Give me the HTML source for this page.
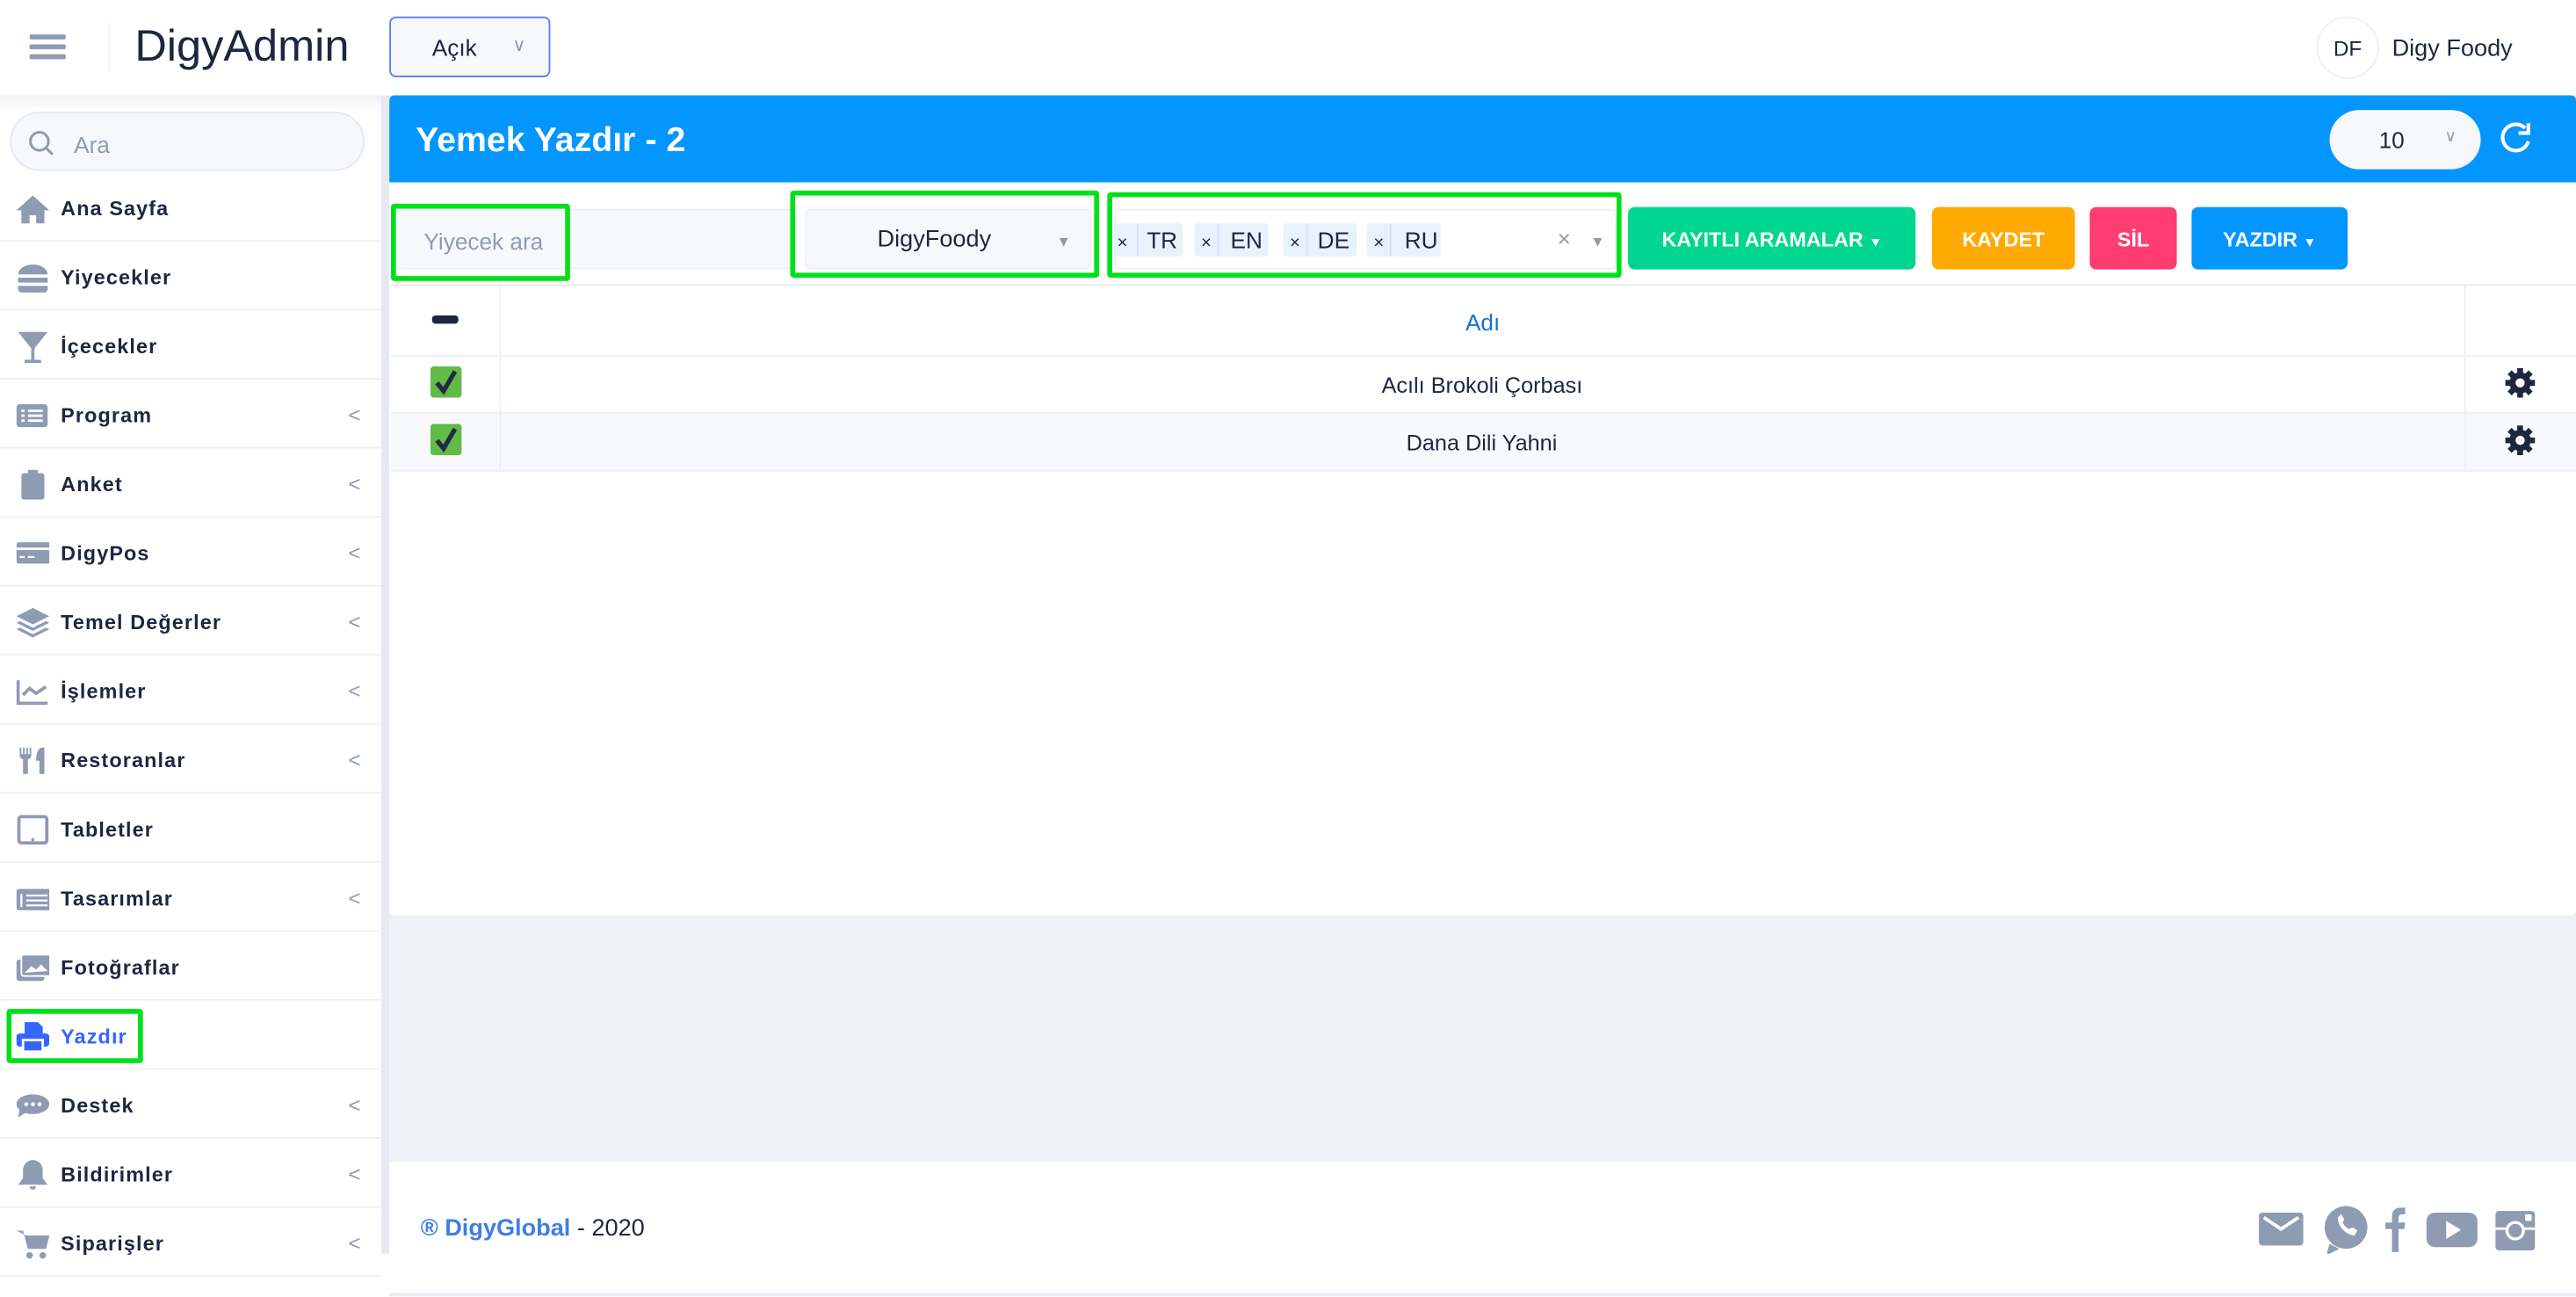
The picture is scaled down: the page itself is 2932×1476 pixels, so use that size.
<!DOCTYPE html>
<html><head><meta charset="utf-8"><style>
*{box-sizing:border-box;margin:0;padding:0}
html,body{width:2932px;height:1476px;overflow:hidden;background:#fff}
#w{width:1568px;height:789.4px;transform:scale(1.86990);transform-origin:0 0;position:relative;font-family:"Liberation Sans",sans-serif;color:#1e2640;background:#fff}
.a{position:absolute}
.nav{position:absolute;left:0;width:232px;height:42px;border-bottom:1px solid #edf0f5}
.nav .ic{position:absolute;left:10px;top:12px;width:20px;height:20px}
.nav .t{position:absolute;left:37px;top:15px;font-size:12.5px;font-weight:bold;letter-spacing:.6px;color:#1e2640}
.nav .ch{position:absolute;left:212px;top:14px;font-size:13px;color:#8f9bb3}
.btn{position:absolute;top:126px;height:38px;border-radius:4px;color:#fff;font-weight:bold;font-size:12.5px;text-align:center;line-height:40px}
.gb{position:absolute;border:3px solid #00e01a;border-radius:2px}
.tag{position:absolute;top:136px;height:20px;background:#e8f2fd;font-size:14px;line-height:21px;border-radius:2px}
</style></head><body><div id="w">
<div class="a" style="left:18px;top:21px;width:22px"><div style="height:3px;background:#8f9bb3;margin-bottom:3px;border-radius:1px"></div><div style="height:3px;background:#8f9bb3;margin-bottom:3px;border-radius:1px"></div><div style="height:3px;background:#8f9bb3;border-radius:1px"></div></div>
<div class="a" style="left:66px;top:14px;width:1px;height:30px;background:#edf0f5"></div>
<div class="a" style="left:82px;top:13px;font-size:27px">DigyAdmin</div>
<div class="a" style="left:237px;top:10px;width:98px;height:37px;border:1px solid #5a7ff0;border-radius:4px;background:#f7f8fc"><span class="a" style="left:25px;top:10px;font-size:14px">Açık</span><span class="a" style="left:74px;top:10px;font-size:11px;color:#8f9bb3">&#8744;</span></div>
<div class="a" style="left:1410px;top:10px;width:38px;height:38px;border-radius:50%;border:1px solid #edf0f5;font-size:13px;text-align:center;line-height:38px">DF</div>
<div class="a" style="left:1456px;top:22px;font-size:14.5px">Digy Foody</div>
<div class="a" style="left:0;top:58px;width:232px;height:10px;background:linear-gradient(#f2f2f4,#fff)"></div>
<div class="a" style="left:232px;top:58px;width:5px;height:705px;background:#e6e9f2"></div>
<div class="a" style="left:6px;top:68px;width:216px;height:36px;border:1px solid #e4e9f2;border-radius:18px;background:#f7f8fc"><svg class="a" style="left:10px;top:10px" width="16" height="16"><circle cx="7" cy="7" r="5.5" fill="none" stroke="#8f9bb3" stroke-width="1.6"/><path d="M11 11l4 4" stroke="#8f9bb3" stroke-width="1.6"/></svg><span class="a" style="left:38px;top:11px;font-size:14px;color:#8f9bb3">Ara</span></div>
<div class="nav" style="top:105px"><svg class="ic" viewBox="0 0 20 20"><path d="M10 2L0 11h3v8h5v-5h4v5h5v-8h3z" fill="#8f9bb3"/></svg><span class="t">Ana Sayfa</span></div>
<div class="nav" style="top:147px"><svg class="ic" viewBox="0 0 20 20"><path d="M1 8a9 6 0 0118 0zM1 10h18v3H1zM1 15h18v2a2 2 0 01-2 2H3a2 2 0 01-2-2z" fill="#8f9bb3"/></svg><span class="t">Yiyecekler</span></div>
<div class="nav" style="top:189px"><svg class="ic" viewBox="0 0 20 20"><path d="M1 1h18L11 11v7h4v2H5v-2h4v-7z" fill="#8f9bb3"/></svg><span class="t">İçecekler</span></div>
<div class="nav" style="top:231px"><svg class="ic" viewBox="0 0 20 20"><rect x="0" y="3" width="19" height="14" rx="2" fill="#8f9bb3"/><path d="M3 7h2M7 7h9M3 10h2M7 10h9M3 13h2M7 13h9" stroke="#fff" stroke-width="1.5"/></svg><span class="t">Program</span><span class="ch">&lt;</span></div>
<div class="nav" style="top:273px"><svg class="ic" viewBox="0 0 20 20"><rect x="3" y="3" width="14" height="16" rx="1.5" fill="#8f9bb3"/><rect x="7" y="1" width="6" height="3" fill="#8f9bb3"/></svg><span class="t">Anket</span><span class="ch">&lt;</span></div>
<div class="nav" style="top:315px"><svg class="ic" viewBox="0 0 20 20"><rect x="0" y="3" width="21" height="13" rx="1.5" fill="#8f9bb3"/><path d="M0 7h21" stroke="#fff" stroke-width="1.5"/><path d="M2 12h3M7 12h4" stroke="#fff" stroke-width="1.2"/></svg><span class="t">DigyPos</span><span class="ch">&lt;</span></div>
<div class="nav" style="top:357px"><svg class="ic" viewBox="0 0 20 20"><path d="M10 1L0 6l10 5 10-5zM0 10l10 5 10-5-2-1-8 4-8-4zM0 14l10 5 10-5-2-1-8 4-8-4z" fill="#8f9bb3"/></svg><span class="t">Temel Değerler</span><span class="ch">&lt;</span></div>
<div class="nav" style="top:399px"><svg class="ic" viewBox="0 0 20 20"><path d="M1 3v14h18" stroke="#8f9bb3" stroke-width="2" fill="none"/><path d="M4 12l4-4 4 3 6-4" stroke="#8f9bb3" stroke-width="2" fill="none"/></svg><span class="t">İşlemler</span><span class="ch">&lt;</span></div>
<div class="nav" style="top:441px"><svg class="ic" viewBox="0 0 20 20"><path d="M2 2v5a2 2 0 002 2v9h3V9a2 2 0 002-2V2H8v4H7V2H6v4H5V2H4v4H3V2zM16 2c-3 0-4 4-4 8h2v8h3V2z" fill="#8f9bb3"/></svg><span class="t">Restoranlar</span><span class="ch">&lt;</span></div>
<div class="nav" style="top:483px"><svg class="ic" viewBox="0 0 20 20"><rect x="1.5" y="2" width="17" height="16" rx="1.5" fill="none" stroke="#8f9bb3" stroke-width="2"/><circle cx="10" cy="16" r="1" fill="#8f9bb3"/></svg><span class="t">Tabletler</span></div>
<div class="nav" style="top:525px"><svg class="ic" viewBox="0 0 20 20"><rect x="0" y="4" width="21" height="13" rx="1.5" fill="#8f9bb3"/><path d="M3 7v8M6 8h13M6 11h13M6 14h13" stroke="#fff" stroke-width="1.2"/></svg><span class="t">Tasarımlar</span><span class="ch">&lt;</span></div>
<div class="nav" style="top:567px"><svg class="ic" viewBox="0 0 20 20"><rect x="0" y="5" width="17" height="13" rx="1.5" fill="#8f9bb3"/><rect x="3" y="2" width="18" height="13" rx="1.5" fill="#8f9bb3" stroke="#fff" stroke-width="1"/><path d="M5 13l4-4 3 2 3-3 4 4z" fill="#fff"/></svg><span class="t">Fotoğraflar</span></div>
<div class="nav" style="top:609px"><svg class="ic" viewBox="0 0 20 20"><path d="M5 1h8l3 3v4H5z" fill="#3366ff"/><rect x="0" y="8" width="20" height="8" rx="2" fill="#3366ff"/><rect x="4" y="12" width="12" height="7" fill="#3366ff" stroke="#fff" stroke-width="1.5"/></svg><span class="t" style="color:#3366ff">Yazdır</span></div>
<div class="gb" style="left:4px;top:614px;width:83px;height:33px"></div>
<div class="nav" style="top:651px"><svg class="ic" viewBox="0 0 20 20"><ellipse cx="10" cy="9" rx="10" ry="6" fill="#8f9bb3"/><path d="M2 12l-1 5 5-3z" fill="#8f9bb3"/><circle cx="6" cy="9" r="1.2" fill="#fff"/><circle cx="10" cy="9" r="1.2" fill="#fff"/><circle cx="14" cy="9" r="1.2" fill="#fff"/></svg><span class="t">Destek</span><span class="ch">&lt;</span></div>
<div class="nav" style="top:693px"><svg class="ic" viewBox="0 0 20 20"><path d="M10 1a6 6 0 00-6 6v5l-3 4h18l-3-4V7a6 6 0 00-6-6zM8 17h4a2 2 0 01-4 0z" fill="#8f9bb3"/></svg><span class="t">Bildirimler</span><span class="ch">&lt;</span></div>
<div class="nav" style="top:735px"><svg class="ic" viewBox="0 0 20 20"><path d="M0 2h4l3 11h11l2-8H6" fill="#8f9bb3"/><path d="M5 5h15l-2 8H7z" fill="#8f9bb3"/><circle cx="8" cy="17" r="2" fill="#8f9bb3"/><circle cx="16" cy="17" r="2" fill="#8f9bb3"/></svg><span class="t">Siparişler</span><span class="ch">&lt;</span></div>
<div class="a" style="left:237px;top:58px;width:1331px;height:731px;background:#edf0f7"></div>
<div class="a" style="left:237px;top:58px;width:1331px;height:53px;background:#0396ff;border-radius:3px 3px 0 0"></div>
<div class="a" style="left:253px;top:74px;font-size:21px;font-weight:bold;color:#fff">Yemek Yazdır - 2</div>
<div class="a" style="left:1418px;top:67px;width:92px;height:36px;border-radius:18px;background:#f7f8fc"><span class="a" style="left:30px;top:10px;font-size:14px">10</span><span class="a" style="left:70px;top:11px;font-size:10px;color:#8f9bb3">&#8744;</span></div>
<svg class="a" style="left:1520px;top:73px" width="22" height="22" viewBox="0 0 22 22"><path d="M17 5A8 8 0 1 0 19 13" fill="none" stroke="#fff" stroke-width="2.2"/><path d="M19 2v6h-6" fill="none" stroke="#fff" stroke-width="2.2"/></svg>
<div class="a" style="left:237px;top:111px;width:1331px;height:446px;background:#fff;border-radius:0 0 3px 3px"></div>
<div class="a" style="left:240px;top:127px;width:245px;height:37px;background:#f7f8fc;border:1px solid #edf0f5;border-radius:3px"></div>
<div class="a" style="left:258px;top:139px;font-size:14px;color:#8f9bb3">Yiyecek ara</div>
<div class="gb" style="left:238px;top:124px;width:109px;height:47px"></div>
<div class="a" style="left:490px;top:127px;width:174px;height:37px;background:#f7f8fc;border:1px solid #edf0f5;border-radius:3px"></div>
<div class="a" style="left:534px;top:138px;font-size:14.5px">DigyFoody</div>
<div class="a" style="left:643px;top:142px;font-size:9px;color:#999">&#9660;</div>
<div class="gb" style="left:481px;top:116px;width:188px;height:53px"></div>
<div class="a" style="left:678px;top:127px;width:306px;height:37px;background:#fff;border:1px solid #edf0f5;border-radius:3px"></div>
<div class="tag" style="left:678px;width:42px"><span style="padding-left:2px;font-size:11px">×</span><span class="a" style="left:14px;top:0;height:20px;border-left:1px solid #cfe3f9;padding-left:5px">TR</span></div>
<div class="tag" style="left:727px;width:45px"><span style="padding-left:4px;font-size:11px">×</span><span class="a" style="left:14px;top:0;height:20px;border-left:1px solid #cfe3f9;padding-left:7px">EN</span></div>
<div class="tag" style="left:781px;width:45px"><span style="padding-left:4px;font-size:11px">×</span><span class="a" style="left:14px;top:0;height:20px;border-left:1px solid #cfe3f9;padding-left:6px">DE</span></div>
<div class="tag" style="left:832px;width:45px"><span style="padding-left:4px;font-size:11px">×</span><span class="a" style="left:14px;top:0;height:20px;border-left:1px solid #cfe3f9;padding-left:8px">RU</span></div>
<div class="a" style="left:948px;top:137px;font-size:14px;color:#999">×</div>
<div class="a" style="left:968px;top:142px;font-size:9px;color:#999">&#9660;</div>
<div class="gb" style="left:674px;top:117px;width:313px;height:52px"></div>
<div class="btn" style="left:991px;width:175px;background:#00d68f">KAYITLI ARAMALAR <span style="font-size:8px">&#9660;</span></div>
<div class="btn" style="left:1176px;width:87px;background:#ffaa00">KAYDET</div>
<div class="btn" style="left:1272px;width:53px;background:#ff3d71">SİL</div>
<div class="btn" style="left:1334px;width:95px;background:#0396ff">YAZDIR <span style="font-size:8px">&#9660;</span></div>
<div class="a" style="left:238px;top:173px;width:1330px;height:1px;background:#e4e9f2"></div>
<div class="a" style="left:238px;top:216px;width:1330px;height:1px;background:#edf0f5"></div>
<div class="a" style="left:238px;top:251px;width:1330px;height:36px;background:#f7f9fc;border-top:1px solid #edf0f5;border-bottom:1px solid #edf0f5"></div>
<div class="a" style="left:304px;top:174px;width:1px;height:113px;background:#edf0f5"></div>
<div class="a" style="left:1500px;top:174px;width:1px;height:113px;background:#edf0f5"></div>
<div class="a" style="left:263px;top:192px;width:16px;height:5px;border-radius:2px;background:#1e2640"></div>
<div class="a" style="left:892px;top:188px;font-size:14px;color:#1d6fd0">Adı</div>
<svg class="a" style="left:262px;top:223px" width="19" height="19"><rect width="19" height="19" rx="2" fill="#61bb46"/><path d="M4 10l4 5 7-12" fill="none" stroke="#222b45" stroke-width="2.8"/></svg>
<svg class="a" style="left:262px;top:258px" width="19" height="19"><rect width="19" height="19" rx="2" fill="#61bb46"/><path d="M4 10l4 5 7-12" fill="none" stroke="#222b45" stroke-width="2.8"/></svg>
<div class="a" style="left:841px;top:227px;font-size:13.5px">Acılı Brokoli Çorbası</div>
<div class="a" style="left:856px;top:262px;font-size:13.5px">Dana Dili Yahni</div>
<svg class="a" style="left:1524px;top:223px" width="20" height="20" viewBox="0 0 20 20"><g fill="#1e2640"><circle cx="10" cy="10" r="6.5"/><g stroke="#1e2640" stroke-width="3.5"><path d="M10 1v18M1 10h18M3.6 3.6l12.8 12.8M16.4 3.6L3.6 16.4"/></g></g><circle cx="10" cy="10" r="2.8" fill="#fff"/></svg>
<svg class="a" style="left:1524px;top:258px" width="20" height="20" viewBox="0 0 20 20"><g fill="#1e2640"><circle cx="10" cy="10" r="6.5"/><g stroke="#1e2640" stroke-width="3.5"><path d="M10 1v18M1 10h18M3.6 3.6l12.8 12.8M16.4 3.6L3.6 16.4"/></g></g><circle cx="10" cy="10" r="2.8" fill="#fff"/></svg>
<div class="a" style="left:237px;top:707px;width:1331px;height:81px;background:#fff;border-bottom:1px solid #e4e9f2"></div>
<div class="a" style="left:256px;top:740px;font-size:14.5px"><b style="color:#3d7ee8">® DigyGlobal</b> - 2020</div>
<svg class="a" style="left:1374px;top:733px" width="180" height="30" viewBox="0 0 180 30"><g fill="#8f9bb3">
<rect x="1" y="5" width="27" height="20" rx="2"/><path d="M4 8l10.5 7L25 8" fill="none" stroke="#fff" stroke-width="2"/>
<circle cx="54" cy="14" r="13"/><path d="M44 24l-2 7 8-4z"/><path d="M49 8c0 5 4 10 10 11l2-3-3-2-2 1c-2-1-3-2-4-4l1-2-2-3z" fill="#fff"/>
<path d="M82 29V15h-4v-4h4V7c0-3 2-5 5-5h3v4h-2c-1 0-2 .5-2 2v3h4l-.5 4H86v14z"/>
<rect x="103" y="5" width="31" height="21" rx="5"/><path d="M115 10v11l9-5.5z" fill="#fff"/>
<rect x="145" y="4" width="24" height="24" rx="2"/><rect x="145" y="14" width="24" height="1.5" fill="#fff"/><circle cx="157" cy="16" r="5" fill="#8f9bb3" stroke="#fff" stroke-width="1.8"/><rect x="163" y="6" width="4" height="4" rx="0.5" fill="#fff"/>
</g></svg>
</div></body></html>
